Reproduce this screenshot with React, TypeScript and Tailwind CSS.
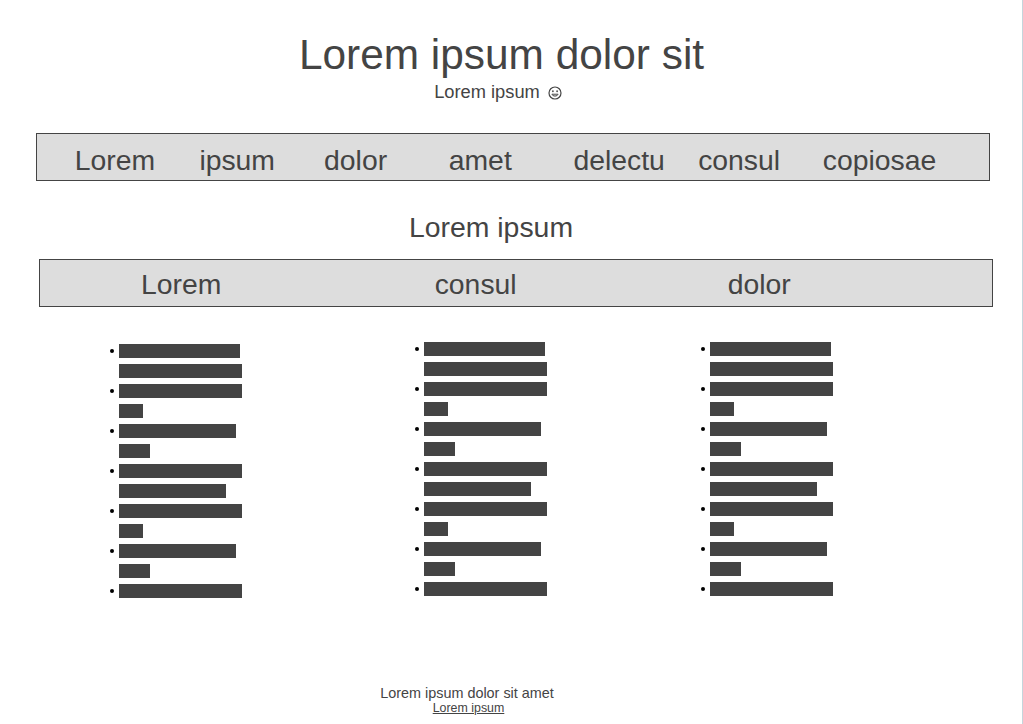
const items1 = ["Lorem", "ipsum", "dolor", "amet", "delectu", "consul", "copiosae"];

const groups: string[][] = [
  ["w-[121px]", "w-[123px]"],
  ["w-[123px]", "w-[24px]"],
  ["w-[117px]", "w-[31px]"],
  ["w-[123px]", "w-[107px]"],
  ["w-[123px]", "w-[24px]"],
  ["w-[117px]", "w-[31px]"],
  ["w-[123px]"],
];

function List({ className }: { className: string }) {
  return (
    <ul className={"text-[8px] leading-5 " + className}>
      {groups.map((g, i) => (
        <li key={i} className="relative">
          <span className="absolute left-[-9px] top-[8px] w-[3.6px] h-[3.6px] rounded-full bg-black"></span>
          {g.map((b, j) => (
            <div key={j} className="h-5">
              <span className={"inline-block h-[14px] align-middle bg-[#444444] " + b}></span>
            </div>
          ))}
        </li>
      ))}
    </ul>
  );
}

function Smiley() {
  return (
    <svg viewBox="0 0 14 14" className="inline-block w-[14px] h-[14px] ml-[3px] align-[-2px]" fill="none">
      <circle cx="7" cy="7" r="6" stroke="#444444" strokeWidth="1.2" />
      <ellipse cx="4.9" cy="5.2" rx="0.85" ry="0.95" fill="#444444" />
      <ellipse cx="9.1" cy="5.2" rx="0.85" ry="0.95" fill="#444444" />
      <path d="M3.9 8.2 H10.1 A3.2 2.6 0 0 1 3.9 8.2 Z" stroke="#444444" strokeWidth="0.9" fill="#cccccc" />
    </svg>
  );
}

export default function App() {
  return (
    <div className="w-[1023px] h-[724px] overflow-hidden bg-white border-r border-[#c5d5dc] font-['Liberation_Sans',Arial,sans-serif] text-[#444444]">
      <header className="pt-[30px] w-[1003px] text-center">
        <h1 className="text-[42.4px] leading-[49px]">Lorem ipsum dolor sit</h1>
        <p className="text-[18.3px] leading-[21px] mt-[2px] pr-[7px]">
          Lorem ipsum <Smiley />
        </p>
      </header>
      <nav className="ml-[36px] mt-[31px] w-[954px] h-[48px] flex items-center pl-[37.7px] pt-[7px] bg-[#dddddd] border border-[#444444] text-[28.35px]">
        {items1.map((t) => (
          <span key={t} className="shrink-0 w-[124.7px]">{t}</span>
        ))}
      </nav>
      <h2 className="mt-[30px] w-[982px] text-center text-[28.4px] leading-[33px]">Lorem ipsum</h2>
      <nav className="ml-[39px] mt-[15px] w-[954px] h-[48px] flex items-center pl-[101px] pt-[2px] bg-[#dddddd] border border-[#444444] text-[28.35px]">
        <span className="w-[293.7px] shrink-0">Lorem</span>
        <span className="w-[293px] shrink-0">consul</span>
        <span className="shrink-0">dolor</span>
      </nav>
      <div className="flex items-start">
        <List className="ml-[119px] mt-[34px] w-[305px]" />
        <List className="mt-[32px] w-[286px]" />
        <List className="mt-[32px] w-[200px]" />
      </div>
      <footer className="mt-[84px] w-[934px] text-center">
        <p className="text-[14.4px] leading-[17px]">Lorem ipsum dolor sit amet</p>
        <a className="block text-[12.4px] leading-[13px] underline pl-[3px]" href="#">Lorem ipsum</a>
      </footer>
    </div>
  );
}
